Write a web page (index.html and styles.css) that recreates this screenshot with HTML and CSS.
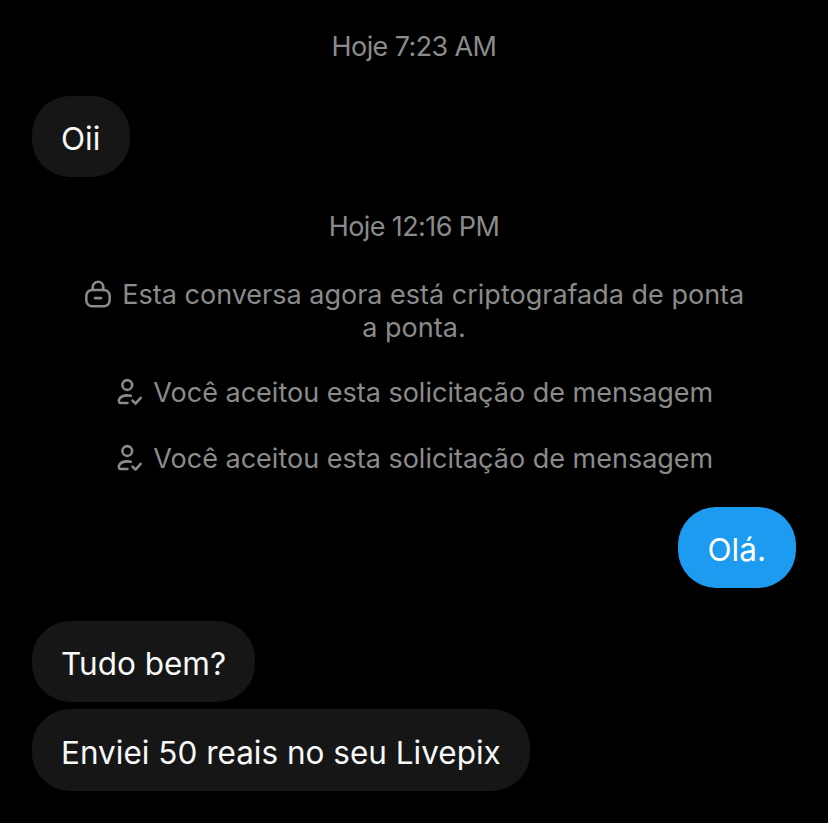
FILE: index.html
```html
<!DOCTYPE html>
<html lang="pt-BR">
<head>
  <meta charset="UTF-8" />
  <meta name="viewport" content="width=device-width, initial-scale=1" />
  <title>Conversa</title>
  <link rel="stylesheet" href="styles.css">
</head>
<body>
  <div class="chat">
    <div class="time time-first">Hoje 7:23 AM</div>
    <div class="bubble in bubble-oii">Oii</div>

    <div class="time time-second">Hoje 12:16 PM</div>

    <p class="notice notice-lock">
      <svg class="icon" viewBox="0 0 24 24" fill="none" stroke="currentColor" stroke-width="2.2" stroke-linecap="round" stroke-linejoin="round">
        <rect x="2" y="8.500" width="20" height="14" rx="5"/>
        <path d="M7.5 8.500V6a4.500 4.500 0 0 1 9 0v2.500"/>
        <path d="M9.500 15.500h5" stroke-width="2.400"/>
      </svg>
      Esta conversa agora está criptografada de ponta a ponta.
    </p>
    <p class="notice">
      <svg class="icon" viewBox="0 0 24 24" fill="none" stroke="currentColor" stroke-width="2.2" stroke-linecap="round" stroke-linejoin="round">
        <circle cx="10.500" cy="6" r="4.200"/>
        <path d="M13.500 15.300c-1-.3-2-.4-3-.4-3 0-5.500 1-6.800 3-.7 1.100-.5 3.600 1 3.600h6"/>
        <path d="M15 19.300l2.600 2.700 4.400-5"/>
      </svg>
      Você aceitou esta solicitação de mensagem
    </p>
    <p class="notice notice-last">
      <svg class="icon" viewBox="0 0 24 24" fill="none" stroke="currentColor" stroke-width="2.2" stroke-linecap="round" stroke-linejoin="round">
        <circle cx="10.500" cy="6" r="4.200"/>
        <path d="M13.500 15.300c-1-.3-2-.4-3-.4-3 0-5.500 1-6.800 3-.7 1.100-.5 3.600 1 3.600h6"/>
        <path d="M15 19.300l2.600 2.700 4.400-5"/>
      </svg>
      Você aceitou esta solicitação de mensagem
    </p>

    <div class="bubble out">Olá.</div>

    <div class="bubble in bubble-tudo">Tudo bem?</div>
    <div class="bubble in bubble-last">Enviei 50 reais no seu Livepix</div>
  </div>
</body>
</html>
```

FILE: styles.css
```css
* {
  box-sizing: border-box;
  margin: 0;
  padding: 0;
}
body {
  font-family: Inter, "Liberation Sans", sans-serif;
  background-color: #000;
  color: #e7e9ea;
}
.chat {
  display: flex;
  flex-direction: column;
  padding: 30px 32px 0;
}
.time {
  text-align: center;
  font-size: 27px;
  line-height: 34px;
  letter-spacing: -0.6px;
  color: #8b8b8b;
}
.time-second {
  margin-top: 33px;
}
.bubble {
  height: 81px;
  display: flex;
  align-items: center;
  padding: 4px 29px 0;
  border-radius: 38px;
  font-size: 31.5px;
  color: #f7f9f9;
  width: fit-content;
}
.in {
  background-color: #161616;
}
.out {
  background-color: #1d9bf0;
  color: #fff;
  align-self: flex-end;
  margin-top: 32px;
  padding-left: 30px;
  padding-right: 30px;
}
.bubble-oii {
  margin-top: 32px;
  padding-right: 30px;
}
.bubble-tudo {
  margin-top: 33px;
}
.bubble-last {
  margin-top: 7px;
  height: 82px;
}
.notice {
  text-align: center;
  font-size: 27px;
  line-height: 33px;
  color: #8b8b8b;
  margin-top: 32px;
  padding: 0 50px;
}
.notice-lock {
  margin-top: 34px;
}
.notice-last {
  margin-top: 33px;
}
.icon {
  width: 28px;
  height: 28px;
  vertical-align: -4px;
  margin-right: 3px;
}
```
